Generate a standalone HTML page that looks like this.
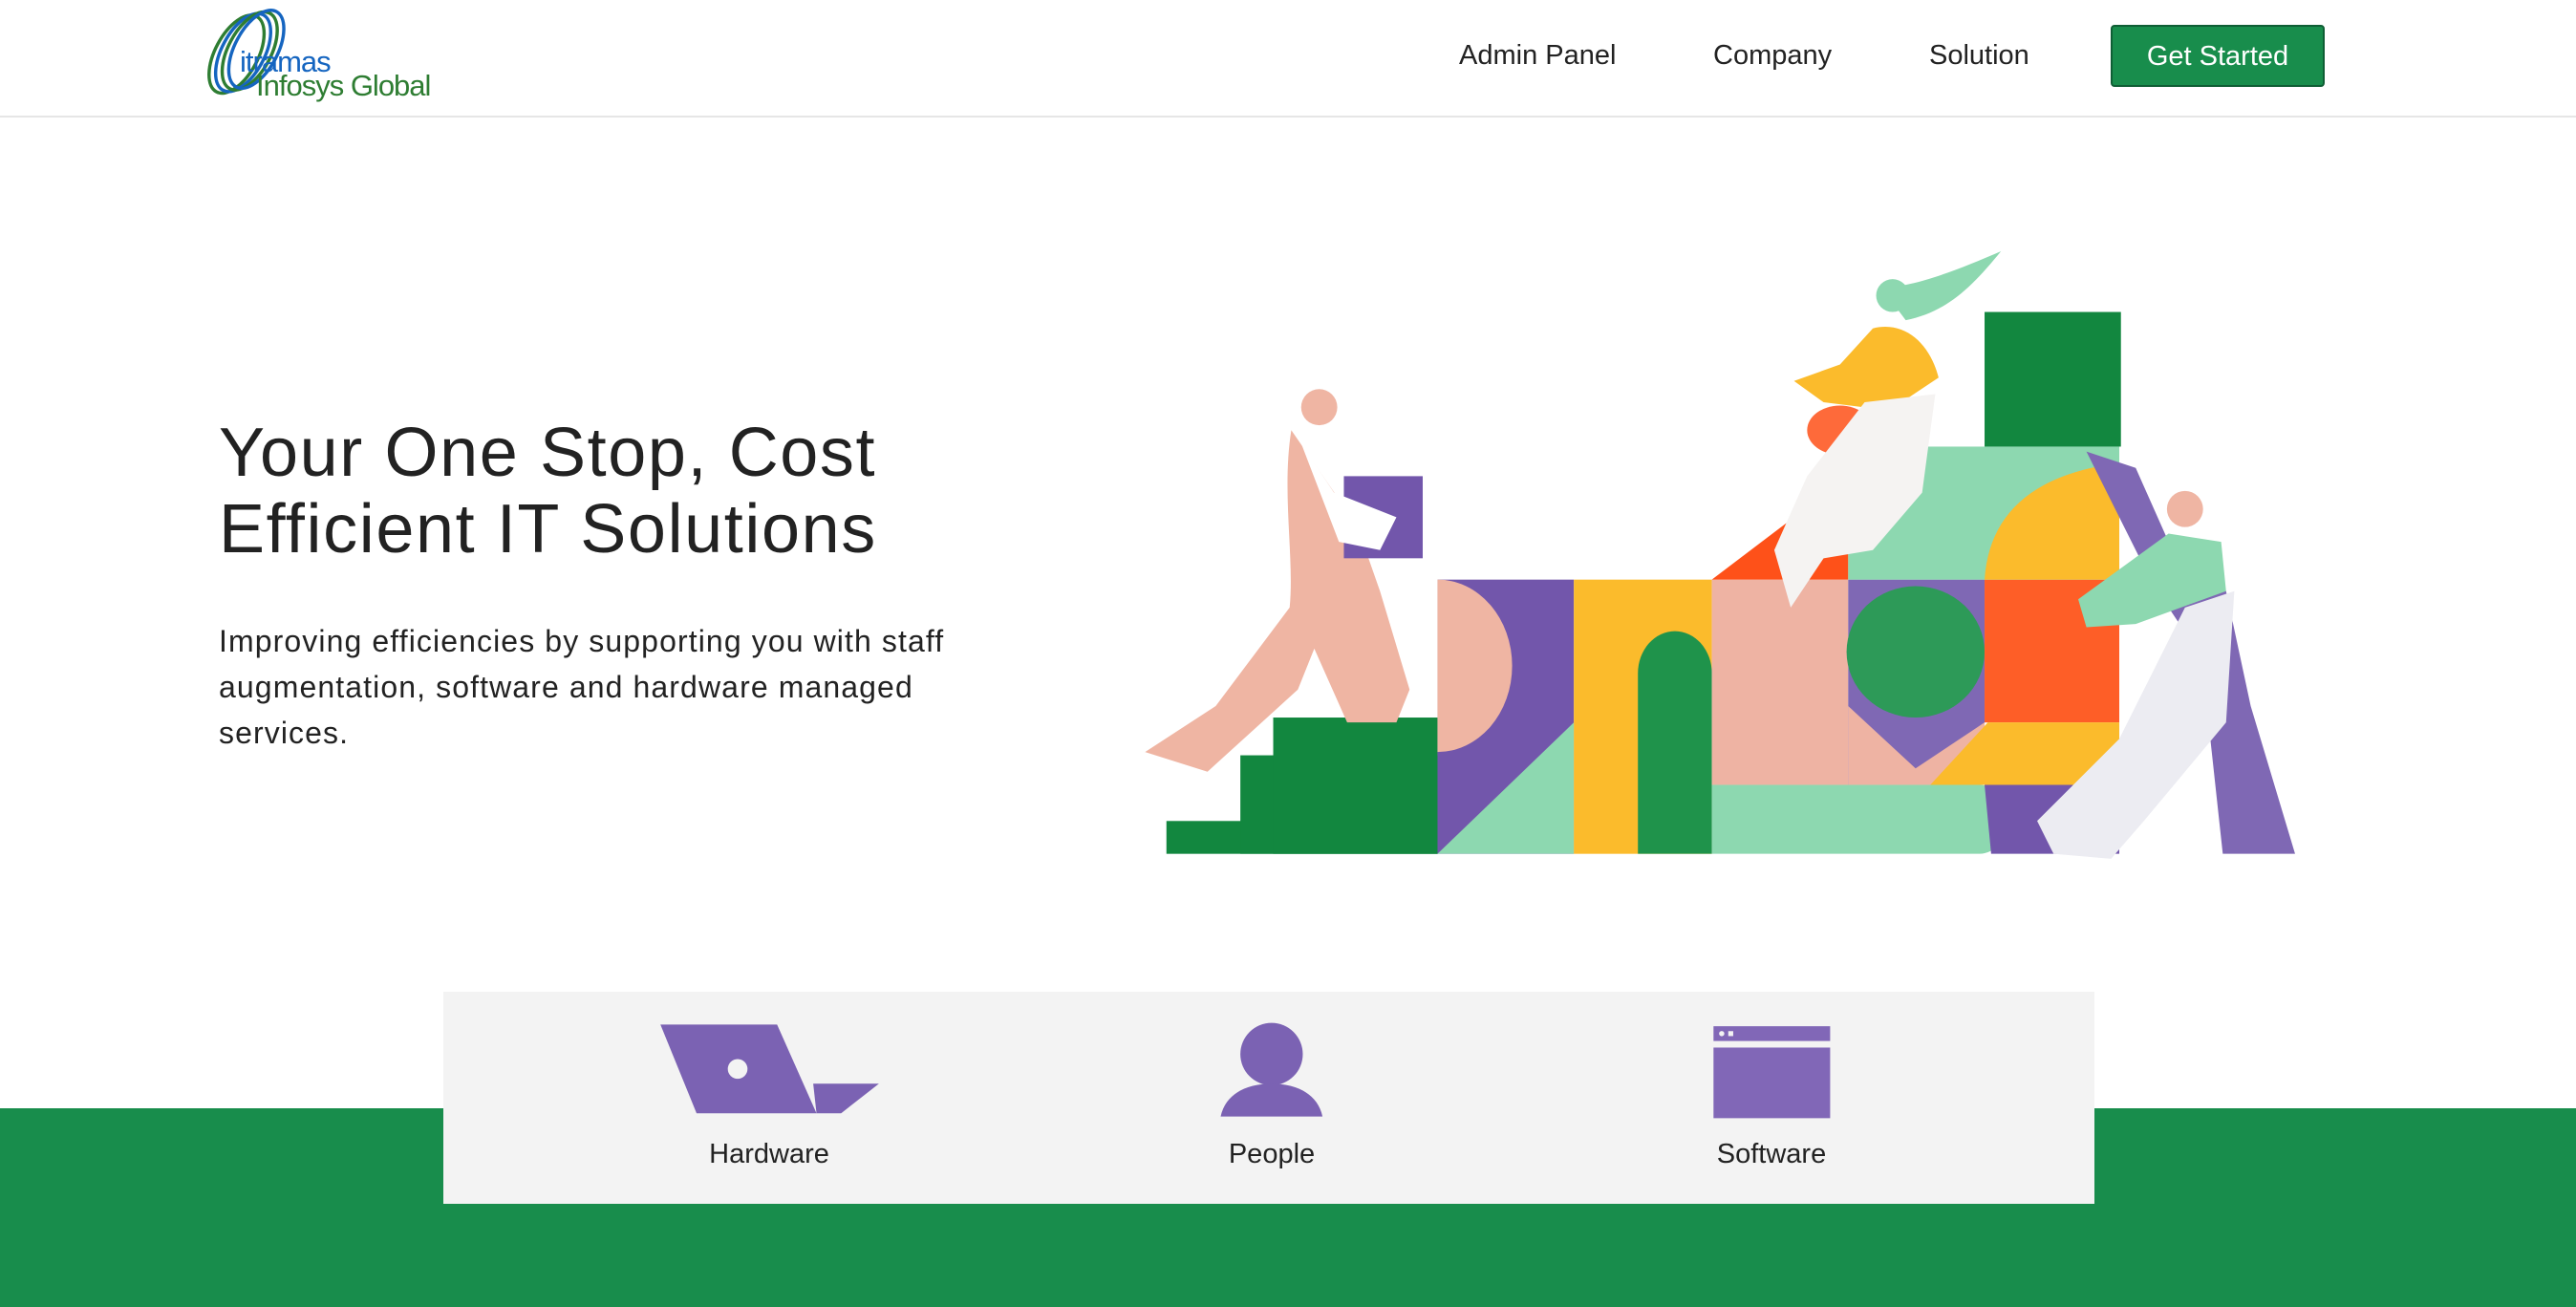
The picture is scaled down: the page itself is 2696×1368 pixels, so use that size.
<!DOCTYPE html>
<html><head><meta charset="utf-8"><style>
html,body{margin:0;padding:0;width:2696px;height:1368px;overflow:hidden;background:#fff;font-family:"Liberation Sans",sans-serif;position:relative}
.a{position:absolute;white-space:nowrap}
.nav{font-size:29px;color:#222;top:42px}
.btn{left:2209px;top:26px;width:220px;height:61px;background:#188d4c;border:2px solid #0f5e35;border-radius:4px;color:#fff;font-size:29px;line-height:63px;text-align:center;box-sizing:content-box}
h1{position:absolute;left:229px;top:434px;margin:0;font-weight:normal;font-size:72px;line-height:80px;color:#222;letter-spacing:1.6px}
p.t{position:absolute;left:229px;top:647px;margin:0;font-size:32px;line-height:48px;color:#222;width:900px;letter-spacing:1.1px}
.lbl{font-size:29px;color:#222;top:1192px;transform:translateX(-50%)}
</style></head><body>
<div style="position:absolute;left:0;top:121px;width:2696px;height:2px;background:#e6e6e6"></div>
<div style="position:absolute;left:0;top:1160px;width:2696px;height:208px;background:#188d4c"></div>
<div style="position:absolute;left:464px;top:1038px;width:1728px;height:222px;background:#f3f3f3"></div>

<svg style="position:absolute;left:0;top:0" width="2696" height="1368" viewBox="0 0 1568 796" preserveAspectRatio="none">
<g fill="none" stroke-width="2">
<ellipse cx="144" cy="33" rx="13" ry="26" transform="rotate(28 144 33)" stroke="#2e7d32"/>
<ellipse cx="148" cy="32" rx="13" ry="26" transform="rotate(28 148 32)" stroke="#1565c0"/>
<ellipse cx="152" cy="31" rx="13" ry="26" transform="rotate(28 152 31)" stroke="#2e7d32"/>
<ellipse cx="156" cy="30" rx="13" ry="26" transform="rotate(28 156 30)" stroke="#1565c0"/>
</g>
<g>
<rect x="710" y="500" width="165" height="20" fill="#12873f"/>
<rect x="755" y="460" width="120" height="60" fill="#12873f"/>
<rect x="775" y="437" width="100" height="83" fill="#12873f"/>
<rect x="1208" y="190" width="83" height="82" fill="#12873f"/>
<rect x="875" y="353" width="83" height="167" fill="#7256ab"/>
<path d="M875 353 A45 52 0 0 1 875 458 Z" fill="#efb5a3"/>
<path d="M875 520 L958 440 L958 520 Z" fill="#8dd8b0"/>
<rect x="958" y="353" width="84" height="167" fill="#fbbb2c"/>
<path d="M997 520 V410 A22 25 0 0 1 1042 410 V520 Z" fill="#1f934b"/>
<rect x="1042" y="353" width="83" height="125" fill="#eeb3a3"/>
<path d="M1042 478 H1205 A17 21 0 0 1 1205 520 H1042 Z" fill="#8dd8b0"/>
<rect x="1125" y="353" width="83" height="125" fill="#7f68b4"/>
<ellipse cx="1166" cy="397" rx="42" ry="40" fill="#2d9a58"/>
<path d="M1125 430 L1166 468 L1208 440 L1208 478 L1125 478Z" fill="#eeb3a3"/>
<rect x="1208" y="353" width="82" height="87" fill="#fe5e27"/>
<path d="M1175 478 L1210 440 H1290 V478 Z" fill="#fbbb2c"/>
<path d="M1208 478 H1290 V520 H1212 Z" fill="#7256ab"/>
<path d="M1042 353 L1125 290 V353 Z" fill="#fe5119"/>
<rect x="1125" y="272" width="165" height="81" fill="#8dd8b0"/>
<path d="M1208 353 Q1212 292 1290 282 V353 Z" fill="#fbbb2c"/>
<circle cx="803" cy="248" r="11" fill="#efb5a3"/>
<path d="M786 262 C780 300 788 340 785 370 L740 430 L697 458 L735 470 L790 420 L800 395 L820 440 L850 440 L858 420 L840 360 L826 320 Z" fill="#efb5a3"/>
<rect x="818" y="290" width="48" height="50" fill="#7256ab"/>
<path d="M792 270 L812 300 L850 315 L840 335 L815 330 Z" fill="#fff"/>
<path d="M1145 175 C1165 175 1190 165 1218 153 C1200 175 1185 190 1160 195 Z" fill="#8dd8b0"/>
<circle cx="1152" cy="180" r="10" fill="#8dd8b0"/>
<path d="M1140 200 C1160 195 1175 210 1180 230 L1150 250 L1110 245 L1092 232 L1120 222 Z" fill="#fbbb2c"/>
<ellipse cx="1120" cy="262" rx="20" ry="15" fill="#fe6a3a"/>
<path d="M1135 245 L1178 240 L1170 300 L1140 335 L1110 340 L1090 370 L1080 335 L1100 290 Z" fill="#f5f3f2"/>
<circle cx="1330" cy="310" r="11" fill="#efb5a3"/>
<path d="M1270 275 L1300 285 L1320 330 L1340 330 L1355 360 L1370 430 L1397 520 L1353 520 L1340 400 L1310 355 Z" fill="#7f68b4"/>
<path d="M1320 325 L1352 330 L1355 360 L1300 380 L1270 382 L1265 365 Z" fill="#8dd8b0"/>
<path d="M1330 370 L1360 360 L1355 440 L1305 500 L1285 523 L1250 520 L1240 500 L1290 450 Z" fill="#ececf2"/>
</g>
<path d="M402 624 H473 L497 678 H424 Z" fill="#7b62b3"/>
<path d="M495 660 H535 L512 678 H497 Z" fill="#7b62b3"/>
<ellipse cx="449" cy="651" rx="6" ry="6" fill="#f3f3f3"/>
<circle cx="774" cy="642" r="19" fill="#7b62b3"/>
<path d="M743 680 C746 666 759 660 774 660 C789 660 802 666 805 680 Z" fill="#7b62b3"/>
<rect x="1043" y="625" width="71" height="9" fill="#8167b7"/>
<circle cx="1048" cy="629.5" r="1.6" fill="#f3f3f3"/><rect x="1052" y="628" width="3" height="3" fill="#f3f3f3"/>
<rect x="1043" y="638" width="71" height="43" fill="#8167b7"/>
</svg>

<div class="a" style="left:251px;top:47px;font-size:31px;color:#1565c0;letter-spacing:-1px">itramas</div>
<div class="a" style="left:268px;top:72px;font-size:31px;color:#2e7d32;letter-spacing:-1px">Infosys Global</div>

<div class="a nav" style="left:1527px">Admin Panel</div>
<div class="a nav" style="left:1793px">Company</div>
<div class="a nav" style="left:2019px">Solution</div>
<div class="a btn">Get Started</div>

<h1>Your One Stop, Cost<br>Efficient IT Solutions</h1>
<p class="t">Improving efficiencies by supporting you with staff<br>augmentation, software and hardware managed<br>services.</p>

<div class="a lbl" style="left:805px">Hardware</div>
<div class="a lbl" style="left:1331px">People</div>
<div class="a lbl" style="left:1854px">Software</div>
</body></html>
